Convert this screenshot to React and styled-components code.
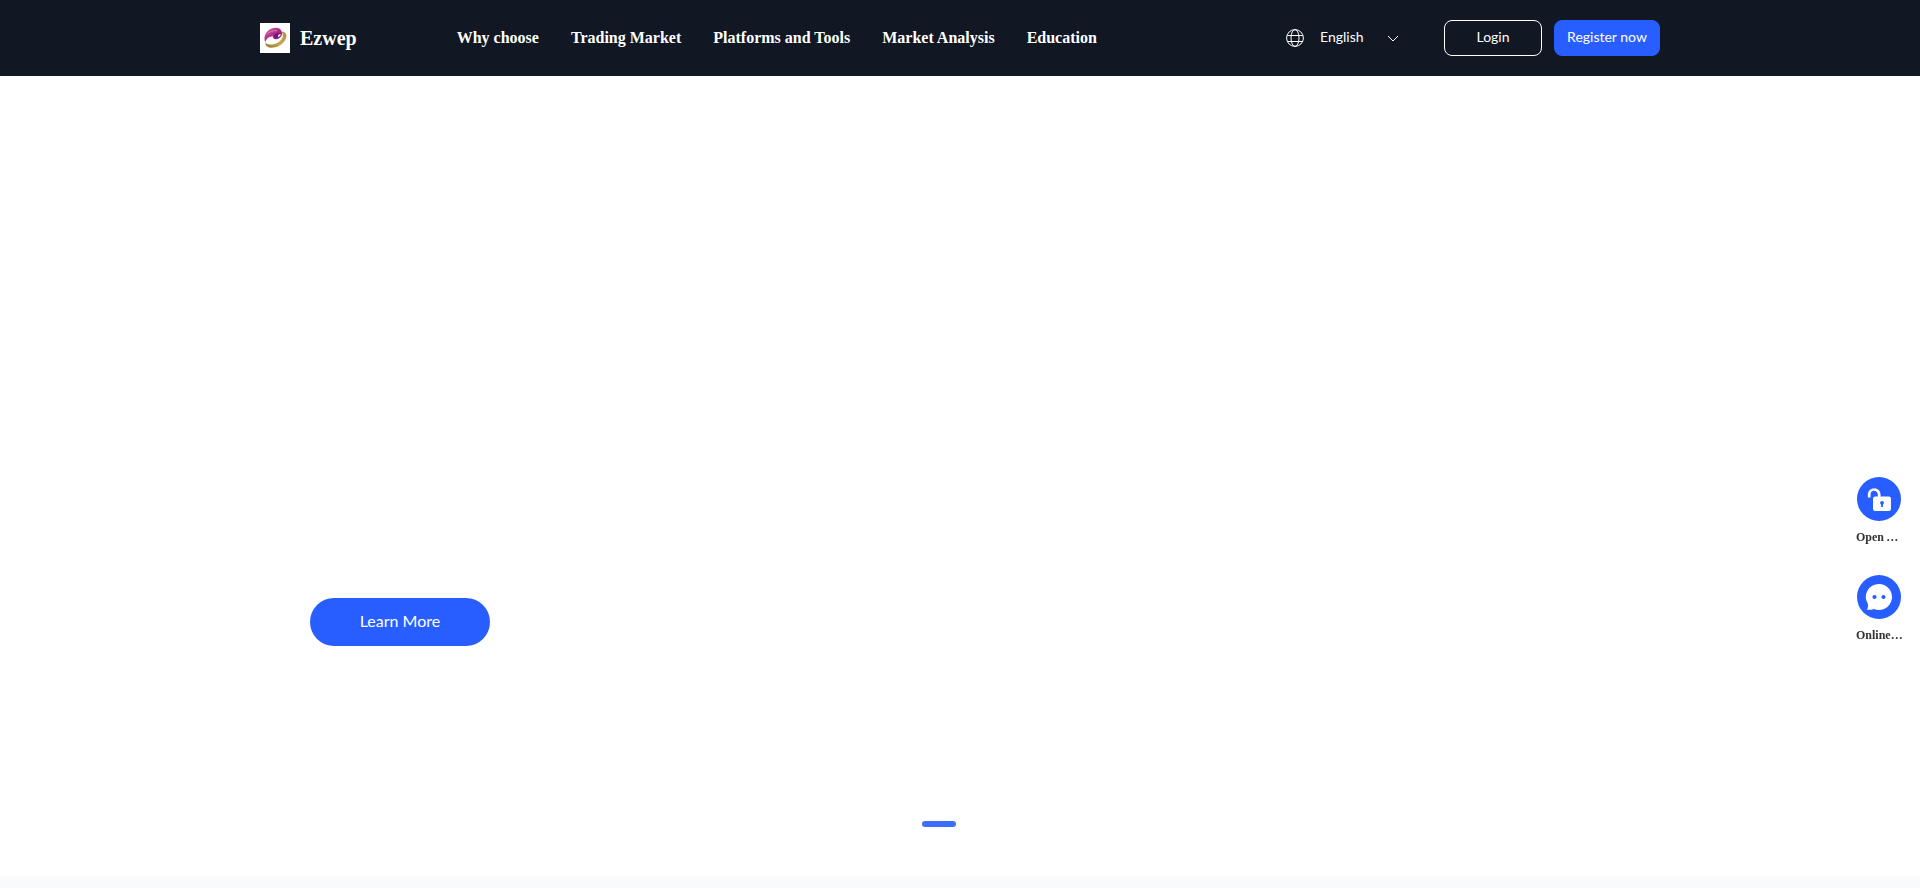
import React, { useState } from 'react';
import styled, { createGlobalStyle } from 'styled-components';

const GlobalStyle = createGlobalStyle`
  * {
    box-sizing: border-box;
  }

  body {
    margin: 0;
    background-color: #f9fafb;
    font-family: "Liberation Serif", "Times New Roman", serif;
    color: #333;
  }
`;

const Header = styled.header`
  background-color: #111723;
  padding: 0 24px;
`;

const HeaderInner = styled.div`
  display: flex;
  align-items: center;
  max-width: 1400px;
  height: 76px;
  margin: 0 auto;
`;

const Brand = styled.a`
  display: flex;
  align-items: center;
  gap: 10px;
  margin-right: 100px;
  color: white;
  font-size: 20px;
  font-weight: bold;
  text-decoration: none;
`;

const Nav = styled.nav`
  display: flex;
  gap: 32px;
`;

const NavLink = styled.a`
  color: white;
  font-size: 16px;
  font-weight: bold;
  line-height: 24px;
  text-decoration: none;
  white-space: nowrap;
`;

const Tools = styled.div`
  display: flex;
  align-items: center;
  margin-left: auto;
`;

const Language = styled.label`
  display: flex;
  align-items: center;
  margin-right: 45px;
`;

const LanguageSelect = styled.select`
  appearance: none;
  width: 67px;
  height: 32px;
  margin-left: 16px;
  padding: 0 0 4px;
  border: none;
  background-color: transparent;
  color: white;
  font-family: Lato, sans-serif;
  font-size: 14px;
  cursor: pointer;

  option {
    color: #333;
  }
`;

const HeaderButton = styled.button`
  width: ${({ $primary }) => ($primary ? '106px' : '98px')};
  height: 36px;
  margin-left: ${({ $primary }) => ($primary ? '12px' : '0')};
  padding: 0 0 4px;
  border: 1px solid ${({ $primary }) => ($primary ? '#285eff' : 'white')};
  border-radius: 8px;
  background-color: ${({ $primary }) => ($primary ? '#285eff' : 'transparent')};
  color: white;
  font-family: Lato, sans-serif;
  font-size: 14px;
  white-space: nowrap;
  cursor: pointer;
`;

const Hero = styled.section`
  display: flex;
  flex-direction: column;
  height: 800px;
  padding: 0 24px 49px;
  background-color: white;
`;

const HeroContent = styled.div`
  flex: 1;
  width: 100%;
  max-width: 1400px;
  margin: 0 auto;
  padding: 522px 50px 0;
`;

const LearnButton = styled.button`
  width: 180px;
  height: 48px;
  padding: 0 0 4px;
  border: none;
  border-radius: 24px;
  background-color: #285eff;
  color: white;
  font-family: Lato, sans-serif;
  font-size: 16px;
  cursor: pointer;
`;

const Indicators = styled.div`
  display: flex;
  justify-content: center;
  gap: 8px;
`;

const Indicator = styled.button`
  width: 34px;
  height: 6px;
  padding: 0;
  border: none;
  border-radius: 3px;
  background-color: ${({ $active }) => ($active ? '#3e6eff' : 'white')};
  cursor: pointer;
`;

const SideBar = styled.aside`
  position: fixed;
  top: 477px;
  right: 16px;
  display: flex;
  flex-direction: column;
  gap: 30px;
`;

const SideLink = styled.a`
  display: flex;
  flex-direction: column;
  gap: 8px;
  width: 48px;
  color: #333;
  text-decoration: none;
`;

const SideIcon = styled.span`
  width: 44px;
  height: 44px;
  margin-left: 1px;
  border-radius: 50%;
  background-color: #285eff;
`;

const SideLabel = styled.span`
  font-size: 12px;
  font-weight: bold;
  line-height: 16px;
  overflow: hidden;
  text-overflow: ellipsis;
  white-space: nowrap;
`;

const navItems = [
  'Why choose',
  'Trading Market',
  'Platforms and Tools',
  'Market Analysis',
  'Education',
];

const slides = [0, 1];

const Logo = () => (
  <svg width="30" height="30" viewBox="0 0 30 30" aria-hidden="true">
    <defs>
      <linearGradient id="swirl" x1="0" y1="0" x2="1" y2="1">
        <stop offset="0" stopColor="#d06a9c" />
        <stop offset="0.5" stopColor="#b3278a" />
        <stop offset="1" stopColor="#7a1a78" />
      </linearGradient>
      <linearGradient id="gold" x1="0" y1="1" x2="1" y2="0">
        <stop offset="0" stopColor="#8f7a2c" />
        <stop offset="0.5" stopColor="#c9a84c" />
        <stop offset="1" stopColor="#b98745" />
      </linearGradient>
    </defs>
    <rect width="30" height="30" fill="white" />
    <path d="M21.5 8.5C25.5 8.5 27.3 11.5 26 15.3C24 21 17 25.3 10.5 24.8C7.5 24.5 5.3 22.5 5.2 19.5C8 22 13 22.3 17.5 19.8C22 17.3 24.7 12.5 21.5 8.5Z" fill="url(#gold)" />
    <path d="M4.5 16C4 10.5 9.5 4.8 15.5 4.8C19 4.8 21.2 6.3 21.8 9C23 11.5 21 14.8 17.5 16C14.5 17 12.5 15.5 12.8 13.3C9.5 13.5 6.5 15 5.5 19C4.8 18 4.5 17 4.5 16Z" fill="url(#swirl)" />
    <path d="M7 11.5C9.500 8.5 13 7.2 17 7.8" fill="none" stroke="#d884ad" strokeWidth="1" />
    <path d="M14 13.5C13.8 10.8 16.8 9.3 20 10.5C18 11 17.6 12.3 18.5 13.6C17.5 15.8 14.2 15.8 14 13.5Z" fill="#6a1a78" />
    <path d="M17.8 13.2C18 11.8 19.2 11 20.7 11C20.8 12.5 19.8 13.6 18.5 14Z" fill="#efd7ea" />
  </svg>
);

const GlobeIcon = () => (
  <svg width="18" height="18" viewBox="0 0 18 18" fill="none" stroke="white" aria-hidden="true">
    <circle cx="9" cy="9" r="8.4" />
    <ellipse cx="9" cy="9" rx="4" ry="8.4" />
    <path d="M1.2 6.5h15.6M1.2 12.5h15.6" />
  </svg>
);

const ChevronIcon = () => (
  <svg width="12" height="12" viewBox="0 0 12 12" fill="none" stroke="white" aria-hidden="true">
    <path d="M1 4l5 5 5-5" />
  </svg>
);

const LockIcon = () => (
  <svg width="44" height="44" viewBox="0 0 44 44" aria-hidden="true">
    <path d="M12.2 20.5V17.5a5 5 0 0 1 10 0V20.5" fill="none" stroke="white" strokeWidth="2.7" />
    <rect x="16" y="19.5" width="18" height="14.5" rx="2.2" fill="white" />
    <circle cx="25" cy="25.8" r="1.9" fill="#285eff" />
    <path d="M25 26v4" stroke="#285eff" strokeWidth="1.8" />
  </svg>
);

const ChatIcon = () => (
  <svg width="44" height="44" viewBox="0 0 44 44" aria-hidden="true">
    <path d="M22 9a13 13 0 1 1-5 25c-2 .8-4.5.8-7 .8 1-1.8 1.3-4 .8-6A13 13 0 0 1 22 9Z" fill="white" />
    <circle cx="17.5" cy="22" r="2.1" fill="#285eff" />
    <circle cx="26.5" cy="22" r="2.1" fill="#285eff" />
  </svg>
);

const App = () => {
  const [activeSlide, setActiveSlide] = useState(0);
  const [language, setLanguage] = useState('English');

  return (
    <>
      <GlobalStyle />
      <Header>
        <HeaderInner>
          <Brand href="#">
            <Logo />
            Ezwep
          </Brand>
          <Nav>
            {navItems.map((item) => (
              <NavLink key={item} href="#">{item}</NavLink>
            ))}
          </Nav>
          <Tools>
            <Language>
              <GlobeIcon />
              <LanguageSelect
                aria-label="Language"
                value={language}
                onChange={(e) => setLanguage(e.target.value)}
              >
                <option>English</option>
              </LanguageSelect>
              <ChevronIcon />
            </Language>
            <HeaderButton>Login</HeaderButton>
            <HeaderButton $primary>Register now</HeaderButton>
          </Tools>
        </HeaderInner>
      </Header>

      <Hero>
        <HeroContent>
          <LearnButton>Learn More</LearnButton>
        </HeroContent>
        <Indicators>
          {slides.map((slide) => (
            <Indicator
              key={slide}
              aria-label={`Slide ${slide + 1}`}
              $active={slide === activeSlide}
              onClick={() => setActiveSlide(slide)}
            />
          ))}
        </Indicators>
      </Hero>

      <SideBar>
        <SideLink href="#">
          <SideIcon><LockIcon /></SideIcon>
          <SideLabel>Open Account</SideLabel>
        </SideLink>
        <SideLink href="#">
          <SideIcon><ChatIcon /></SideIcon>
          <SideLabel>Online Service</SideLabel>
        </SideLink>
      </SideBar>
    </>
  );
};

export default App;
